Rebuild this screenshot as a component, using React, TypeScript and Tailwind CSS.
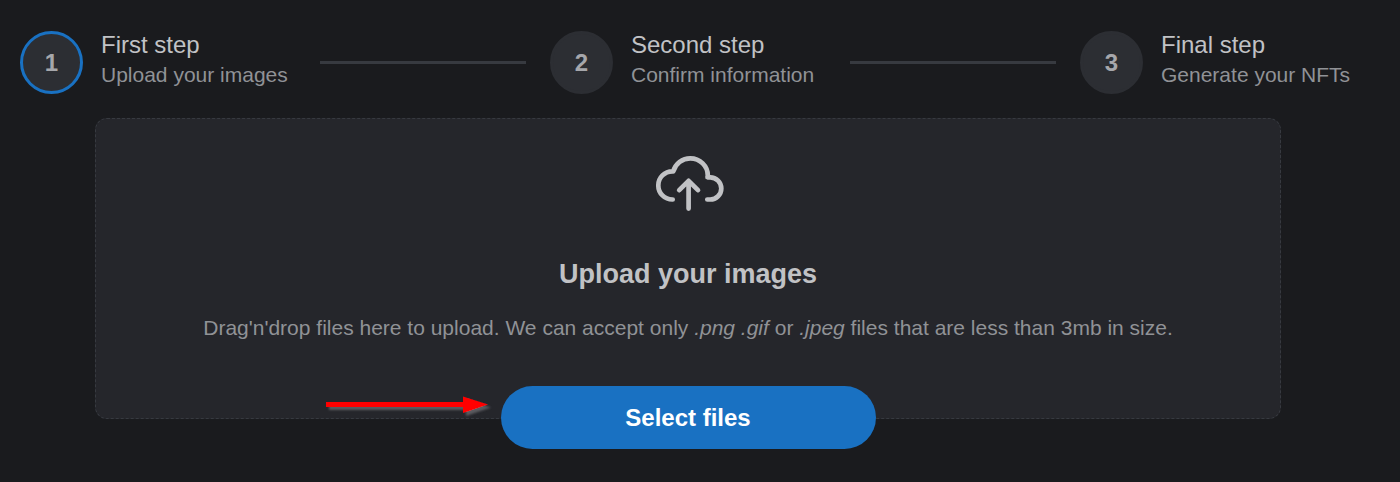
import { Fragment } from "react";

const steps = [
  { title: "First step", description: "Upload your images" },
  { title: "Second step", description: "Confirm information" },
  { title: "Final step", description: "Generate your NFTs" },
];

function Stepper({ active }: { active: number }) {
  return (
    <ol className="flex items-center">
      {steps.map((step, index) => (
        <Fragment key={step.title}>
          {index > 0 && (
            <li aria-hidden="true" className="mx-6 h-[3px] flex-1 bg-[#373a40]" />
          )}
          <li
            aria-current={index === active ? "step" : undefined}
            className="flex w-[276px] shrink-0 gap-[18px]"
          >
            <span
              className={`flex size-[63px] shrink-0 items-center justify-center rounded-full border-3 bg-[#2c2e33] text-2xl font-bold text-[#a6a7ab] ${
                index === active ? "border-[#1971c2]" : "border-[#2c2e33]"
              }`}
            >
              {index + 1}
            </span>
            <span className="flex flex-col whitespace-nowrap">
              <span className="text-2xl leading-7 text-[#c1c2c5]">{step.title}</span>
              <span className="text-[21px] leading-8 text-[#909296]">{step.description}</span>
            </span>
          </li>
        </Fragment>
      ))}
    </ol>
  );
}

function CloudUploadIcon() {
  return (
    <svg
      aria-hidden="true"
      width="76"
      height="76"
      viewBox="0 0 76 76"
      fill="none"
      stroke="#c1c2c5"
      strokeWidth="4.7"
      strokeLinecap="round"
      strokeLinejoin="round"
    >
      <path d="M22.7 54.5H22.4A14.1 14.1 0 0 1 22.4 26.3H23.3C25.5 18.4 32.4 13.3 40.3 13.3C50 13.3 57.8 21 57.8 30.4L57.5 32.3H60.2A11.1 11.1 0 0 1 60.2 54.5H57.3" />
      <path d="M29.2 45.2L38.6 35.8L48 45.2M38.6 36V63.6" />
    </svg>
  );
}

function PointerArrow() {
  return (
    <svg
      aria-hidden="true"
      className="absolute bottom-0 left-[230px]"
      width="168"
      height="24"
      viewBox="0 0 168 24"
    >
      <defs>
        <filter id="arrow-shadow" x="-5%" y="-50%" width="115%" height="220%">
          <feDropShadow dx="3" dy="3" stdDeviation="1" floodColor="#606165" floodOpacity="0.9" />
        </filter>
      </defs>
      <path
        d="M0 8H137V2.5L162 10.5L137 19V13H0Z"
        fill="#ff0000"
        filter="url(#arrow-shadow)"
      />
    </svg>
  );
}

export default function App() {
  return (
    <main className="min-h-screen bg-[#1a1b1e] pt-[31px] pr-11 pb-8 pl-5 font-['Liberation_Sans',Arial,sans-serif]">
      <Stepper active={0} />
      <div className="mt-6 px-[75px]">
        <section className="relative flex flex-col items-center rounded-xl border border-dashed border-[#373a40] bg-[#25262b] px-6 pt-[26px]">
          <CloudUploadIcon />
          <h2 className="mt-[33px] text-[27px] leading-10 font-bold text-[#c1c2c5]">
            Upload your images
          </h2>
          <p className="mt-[18px] text-center text-[21px] leading-8 text-[#909296]">
            Drag'n'drop files here to upload. We can accept only <i>.png .gif</i> or{" "}
            <i>.jpeg</i> files that are less than 3mb in size.
          </p>
          <button
            type="button"
            className="mt-[42px] -mb-[31px] h-[63px] w-[375px] cursor-pointer rounded-full bg-[#1971c2] text-2xl font-bold text-white"
          >
            Select files
          </button>
          <PointerArrow />
        </section>
      </div>
    </main>
  );
}
